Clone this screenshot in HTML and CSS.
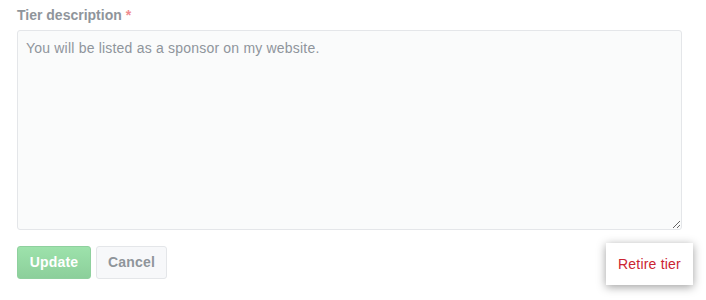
FILE: index.html
```html
<!DOCTYPE html>
<html>
<head>
<meta charset="utf-8">
<link rel="stylesheet" href="styles.css">
</head>
<body>
<div class="form">
  <label class="label">Tier description <span class="req">*</span></label>
  <textarea class="desc" placeholder="You will be listed as a sponsor on my website."></textarea>
  <div class="actions">
    <div class="left">
      <button class="btn btn-primary">Update</button>
      <button class="btn btn-default">Cancel</button>
    </div>
    <div class="retire">Retire tier</div>
  </div>
</div>
</body>
</html>
```
FILE: styles.css
```css
html, body { margin: 0; padding: 0; background: #fff; }
body { font-family: "Liberation Sans", Arial, sans-serif; font-size: 14px; min-height: 300px; }
.form { padding: 5px 24px 0 17px; display: flex; flex-direction: column; }
.label { font-weight: bold; color: #8f959b; font-size: 14px; line-height: 20px; height: 20px; }
.req { color: #f08c8f; }
.desc {
  margin-top: 5px;
  height: 200px;
  box-sizing: border-box;
  border: 1px solid #e4e6e9;
  border-radius: 3px;
  background: #fafbfb;
  padding: 7px 8px;
  font-family: inherit;
  font-size: 14px;
  line-height: 20px;
  letter-spacing: 0.2px;
  resize: vertical;
  outline: none;
}
.desc::placeholder { color: #8f959b; }
.actions { display: flex; justify-content: space-between; align-items: center; margin-top: 13px; margin-right: -11px; }
.left { display: flex; gap: 5px; margin-top: 3px; align-self: flex-start; }
.btn {
  font-family: inherit; font-size: 14px; font-weight: bold;
  height: 33px; box-sizing: border-box; border-radius: 3px;
  padding: 0 8px; line-height: 31px; letter-spacing: 0.2px;
}
.btn-primary { width: 74px; color: #fff; background: linear-gradient(#9de2ab, #8ccf9b); border: 1px solid #8fd09e; }
.btn-default { width: 71px; color: #8f959b; background: #f7f8fa; border: 1px solid #e4e6e9; }
.retire {
  width: 87px; height: 42px; box-sizing: border-box;
  display: flex; align-items: center; justify-content: center;
  color: #cb2431; background: #fff;
  box-shadow: 0 2px 9px rgba(0,0,0,0.38);
  font-size: 14px; letter-spacing: 0.2px;
}
```
